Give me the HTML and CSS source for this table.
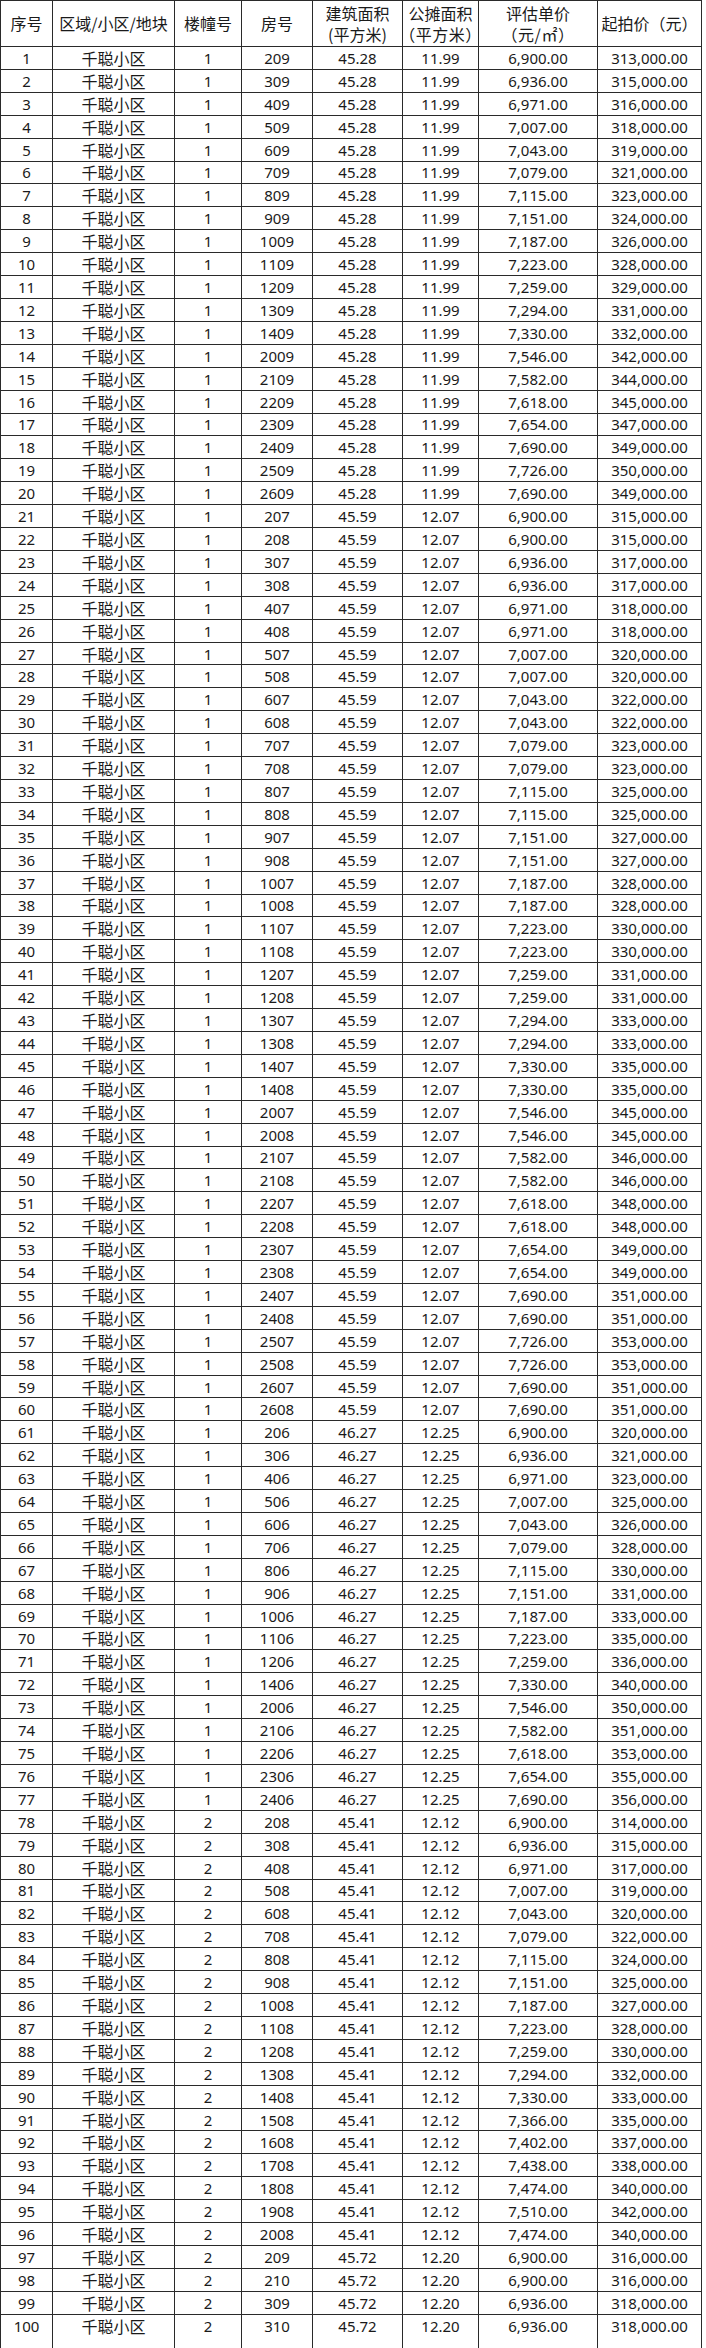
FILE: index.html
```html
<!DOCTYPE html>
<html lang="zh-CN">
<head>
<meta charset="utf-8">
<title>起拍价表</title>
<link rel="stylesheet" href="styles.css">
</head>
<body>
<table class="sheet">
<colgroup>
<col class="c1"><col class="c2"><col class="c3"><col class="c4"><col class="c5"><col class="c6"><col class="c7"><col class="c8">
</colgroup>
<thead>
<tr class="head"><th>序号</th><th>区域/小区/地块</th><th>楼幢号</th><th>房号</th><th>建筑面积<br>(平方米)</th><th>公摊面积<br><span class="unit">（平方米）</span></th><th>评估单价<br><span class="unit">（元/㎡）</span></th><th>起拍价（元）</th></tr>
</thead>
<tbody>
<tr><td>1</td><td>千聪小区</td><td>1</td><td>209</td><td>45.28</td><td>11.99</td><td>6,900.00</td><td>313,000.00</td></tr>
<tr><td>2</td><td>千聪小区</td><td>1</td><td>309</td><td>45.28</td><td>11.99</td><td>6,936.00</td><td>315,000.00</td></tr>
<tr><td>3</td><td>千聪小区</td><td>1</td><td>409</td><td>45.28</td><td>11.99</td><td>6,971.00</td><td>316,000.00</td></tr>
<tr><td>4</td><td>千聪小区</td><td>1</td><td>509</td><td>45.28</td><td>11.99</td><td>7,007.00</td><td>318,000.00</td></tr>
<tr><td>5</td><td>千聪小区</td><td>1</td><td>609</td><td>45.28</td><td>11.99</td><td>7,043.00</td><td>319,000.00</td></tr>
<tr><td>6</td><td>千聪小区</td><td>1</td><td>709</td><td>45.28</td><td>11.99</td><td>7,079.00</td><td>321,000.00</td></tr>
<tr><td>7</td><td>千聪小区</td><td>1</td><td>809</td><td>45.28</td><td>11.99</td><td>7,115.00</td><td>323,000.00</td></tr>
<tr><td>8</td><td>千聪小区</td><td>1</td><td>909</td><td>45.28</td><td>11.99</td><td>7,151.00</td><td>324,000.00</td></tr>
<tr><td>9</td><td>千聪小区</td><td>1</td><td>1009</td><td>45.28</td><td>11.99</td><td>7,187.00</td><td>326,000.00</td></tr>
<tr><td>10</td><td>千聪小区</td><td>1</td><td>1109</td><td>45.28</td><td>11.99</td><td>7,223.00</td><td>328,000.00</td></tr>
<tr><td>11</td><td>千聪小区</td><td>1</td><td>1209</td><td>45.28</td><td>11.99</td><td>7,259.00</td><td>329,000.00</td></tr>
<tr><td>12</td><td>千聪小区</td><td>1</td><td>1309</td><td>45.28</td><td>11.99</td><td>7,294.00</td><td>331,000.00</td></tr>
<tr><td>13</td><td>千聪小区</td><td>1</td><td>1409</td><td>45.28</td><td>11.99</td><td>7,330.00</td><td>332,000.00</td></tr>
<tr><td>14</td><td>千聪小区</td><td>1</td><td>2009</td><td>45.28</td><td>11.99</td><td>7,546.00</td><td>342,000.00</td></tr>
<tr><td>15</td><td>千聪小区</td><td>1</td><td>2109</td><td>45.28</td><td>11.99</td><td>7,582.00</td><td>344,000.00</td></tr>
<tr><td>16</td><td>千聪小区</td><td>1</td><td>2209</td><td>45.28</td><td>11.99</td><td>7,618.00</td><td>345,000.00</td></tr>
<tr><td>17</td><td>千聪小区</td><td>1</td><td>2309</td><td>45.28</td><td>11.99</td><td>7,654.00</td><td>347,000.00</td></tr>
<tr><td>18</td><td>千聪小区</td><td>1</td><td>2409</td><td>45.28</td><td>11.99</td><td>7,690.00</td><td>349,000.00</td></tr>
<tr><td>19</td><td>千聪小区</td><td>1</td><td>2509</td><td>45.28</td><td>11.99</td><td>7,726.00</td><td>350,000.00</td></tr>
<tr><td>20</td><td>千聪小区</td><td>1</td><td>2609</td><td>45.28</td><td>11.99</td><td>7,690.00</td><td>349,000.00</td></tr>
<tr><td>21</td><td>千聪小区</td><td>1</td><td>207</td><td>45.59</td><td>12.07</td><td>6,900.00</td><td>315,000.00</td></tr>
<tr><td>22</td><td>千聪小区</td><td>1</td><td>208</td><td>45.59</td><td>12.07</td><td>6,900.00</td><td>315,000.00</td></tr>
<tr><td>23</td><td>千聪小区</td><td>1</td><td>307</td><td>45.59</td><td>12.07</td><td>6,936.00</td><td>317,000.00</td></tr>
<tr><td>24</td><td>千聪小区</td><td>1</td><td>308</td><td>45.59</td><td>12.07</td><td>6,936.00</td><td>317,000.00</td></tr>
<tr><td>25</td><td>千聪小区</td><td>1</td><td>407</td><td>45.59</td><td>12.07</td><td>6,971.00</td><td>318,000.00</td></tr>
<tr><td>26</td><td>千聪小区</td><td>1</td><td>408</td><td>45.59</td><td>12.07</td><td>6,971.00</td><td>318,000.00</td></tr>
<tr><td>27</td><td>千聪小区</td><td>1</td><td>507</td><td>45.59</td><td>12.07</td><td>7,007.00</td><td>320,000.00</td></tr>
<tr><td>28</td><td>千聪小区</td><td>1</td><td>508</td><td>45.59</td><td>12.07</td><td>7,007.00</td><td>320,000.00</td></tr>
<tr><td>29</td><td>千聪小区</td><td>1</td><td>607</td><td>45.59</td><td>12.07</td><td>7,043.00</td><td>322,000.00</td></tr>
<tr><td>30</td><td>千聪小区</td><td>1</td><td>608</td><td>45.59</td><td>12.07</td><td>7,043.00</td><td>322,000.00</td></tr>
<tr><td>31</td><td>千聪小区</td><td>1</td><td>707</td><td>45.59</td><td>12.07</td><td>7,079.00</td><td>323,000.00</td></tr>
<tr><td>32</td><td>千聪小区</td><td>1</td><td>708</td><td>45.59</td><td>12.07</td><td>7,079.00</td><td>323,000.00</td></tr>
<tr><td>33</td><td>千聪小区</td><td>1</td><td>807</td><td>45.59</td><td>12.07</td><td>7,115.00</td><td>325,000.00</td></tr>
<tr><td>34</td><td>千聪小区</td><td>1</td><td>808</td><td>45.59</td><td>12.07</td><td>7,115.00</td><td>325,000.00</td></tr>
<tr><td>35</td><td>千聪小区</td><td>1</td><td>907</td><td>45.59</td><td>12.07</td><td>7,151.00</td><td>327,000.00</td></tr>
<tr><td>36</td><td>千聪小区</td><td>1</td><td>908</td><td>45.59</td><td>12.07</td><td>7,151.00</td><td>327,000.00</td></tr>
<tr><td>37</td><td>千聪小区</td><td>1</td><td>1007</td><td>45.59</td><td>12.07</td><td>7,187.00</td><td>328,000.00</td></tr>
<tr><td>38</td><td>千聪小区</td><td>1</td><td>1008</td><td>45.59</td><td>12.07</td><td>7,187.00</td><td>328,000.00</td></tr>
<tr><td>39</td><td>千聪小区</td><td>1</td><td>1107</td><td>45.59</td><td>12.07</td><td>7,223.00</td><td>330,000.00</td></tr>
<tr><td>40</td><td>千聪小区</td><td>1</td><td>1108</td><td>45.59</td><td>12.07</td><td>7,223.00</td><td>330,000.00</td></tr>
<tr><td>41</td><td>千聪小区</td><td>1</td><td>1207</td><td>45.59</td><td>12.07</td><td>7,259.00</td><td>331,000.00</td></tr>
<tr><td>42</td><td>千聪小区</td><td>1</td><td>1208</td><td>45.59</td><td>12.07</td><td>7,259.00</td><td>331,000.00</td></tr>
<tr><td>43</td><td>千聪小区</td><td>1</td><td>1307</td><td>45.59</td><td>12.07</td><td>7,294.00</td><td>333,000.00</td></tr>
<tr><td>44</td><td>千聪小区</td><td>1</td><td>1308</td><td>45.59</td><td>12.07</td><td>7,294.00</td><td>333,000.00</td></tr>
<tr><td>45</td><td>千聪小区</td><td>1</td><td>1407</td><td>45.59</td><td>12.07</td><td>7,330.00</td><td>335,000.00</td></tr>
<tr><td>46</td><td>千聪小区</td><td>1</td><td>1408</td><td>45.59</td><td>12.07</td><td>7,330.00</td><td>335,000.00</td></tr>
<tr><td>47</td><td>千聪小区</td><td>1</td><td>2007</td><td>45.59</td><td>12.07</td><td>7,546.00</td><td>345,000.00</td></tr>
<tr><td>48</td><td>千聪小区</td><td>1</td><td>2008</td><td>45.59</td><td>12.07</td><td>7,546.00</td><td>345,000.00</td></tr>
<tr><td>49</td><td>千聪小区</td><td>1</td><td>2107</td><td>45.59</td><td>12.07</td><td>7,582.00</td><td>346,000.00</td></tr>
<tr><td>50</td><td>千聪小区</td><td>1</td><td>2108</td><td>45.59</td><td>12.07</td><td>7,582.00</td><td>346,000.00</td></tr>
<tr><td>51</td><td>千聪小区</td><td>1</td><td>2207</td><td>45.59</td><td>12.07</td><td>7,618.00</td><td>348,000.00</td></tr>
<tr><td>52</td><td>千聪小区</td><td>1</td><td>2208</td><td>45.59</td><td>12.07</td><td>7,618.00</td><td>348,000.00</td></tr>
<tr><td>53</td><td>千聪小区</td><td>1</td><td>2307</td><td>45.59</td><td>12.07</td><td>7,654.00</td><td>349,000.00</td></tr>
<tr><td>54</td><td>千聪小区</td><td>1</td><td>2308</td><td>45.59</td><td>12.07</td><td>7,654.00</td><td>349,000.00</td></tr>
<tr><td>55</td><td>千聪小区</td><td>1</td><td>2407</td><td>45.59</td><td>12.07</td><td>7,690.00</td><td>351,000.00</td></tr>
<tr><td>56</td><td>千聪小区</td><td>1</td><td>2408</td><td>45.59</td><td>12.07</td><td>7,690.00</td><td>351,000.00</td></tr>
<tr><td>57</td><td>千聪小区</td><td>1</td><td>2507</td><td>45.59</td><td>12.07</td><td>7,726.00</td><td>353,000.00</td></tr>
<tr><td>58</td><td>千聪小区</td><td>1</td><td>2508</td><td>45.59</td><td>12.07</td><td>7,726.00</td><td>353,000.00</td></tr>
<tr><td>59</td><td>千聪小区</td><td>1</td><td>2607</td><td>45.59</td><td>12.07</td><td>7,690.00</td><td>351,000.00</td></tr>
<tr><td>60</td><td>千聪小区</td><td>1</td><td>2608</td><td>45.59</td><td>12.07</td><td>7,690.00</td><td>351,000.00</td></tr>
<tr><td>61</td><td>千聪小区</td><td>1</td><td>206</td><td>46.27</td><td>12.25</td><td>6,900.00</td><td>320,000.00</td></tr>
<tr><td>62</td><td>千聪小区</td><td>1</td><td>306</td><td>46.27</td><td>12.25</td><td>6,936.00</td><td>321,000.00</td></tr>
<tr><td>63</td><td>千聪小区</td><td>1</td><td>406</td><td>46.27</td><td>12.25</td><td>6,971.00</td><td>323,000.00</td></tr>
<tr><td>64</td><td>千聪小区</td><td>1</td><td>506</td><td>46.27</td><td>12.25</td><td>7,007.00</td><td>325,000.00</td></tr>
<tr><td>65</td><td>千聪小区</td><td>1</td><td>606</td><td>46.27</td><td>12.25</td><td>7,043.00</td><td>326,000.00</td></tr>
<tr><td>66</td><td>千聪小区</td><td>1</td><td>706</td><td>46.27</td><td>12.25</td><td>7,079.00</td><td>328,000.00</td></tr>
<tr><td>67</td><td>千聪小区</td><td>1</td><td>806</td><td>46.27</td><td>12.25</td><td>7,115.00</td><td>330,000.00</td></tr>
<tr><td>68</td><td>千聪小区</td><td>1</td><td>906</td><td>46.27</td><td>12.25</td><td>7,151.00</td><td>331,000.00</td></tr>
<tr><td>69</td><td>千聪小区</td><td>1</td><td>1006</td><td>46.27</td><td>12.25</td><td>7,187.00</td><td>333,000.00</td></tr>
<tr><td>70</td><td>千聪小区</td><td>1</td><td>1106</td><td>46.27</td><td>12.25</td><td>7,223.00</td><td>335,000.00</td></tr>
<tr><td>71</td><td>千聪小区</td><td>1</td><td>1206</td><td>46.27</td><td>12.25</td><td>7,259.00</td><td>336,000.00</td></tr>
<tr><td>72</td><td>千聪小区</td><td>1</td><td>1406</td><td>46.27</td><td>12.25</td><td>7,330.00</td><td>340,000.00</td></tr>
<tr><td>73</td><td>千聪小区</td><td>1</td><td>2006</td><td>46.27</td><td>12.25</td><td>7,546.00</td><td>350,000.00</td></tr>
<tr><td>74</td><td>千聪小区</td><td>1</td><td>2106</td><td>46.27</td><td>12.25</td><td>7,582.00</td><td>351,000.00</td></tr>
<tr><td>75</td><td>千聪小区</td><td>1</td><td>2206</td><td>46.27</td><td>12.25</td><td>7,618.00</td><td>353,000.00</td></tr>
<tr><td>76</td><td>千聪小区</td><td>1</td><td>2306</td><td>46.27</td><td>12.25</td><td>7,654.00</td><td>355,000.00</td></tr>
<tr><td>77</td><td>千聪小区</td><td>1</td><td>2406</td><td>46.27</td><td>12.25</td><td>7,690.00</td><td>356,000.00</td></tr>
<tr><td>78</td><td>千聪小区</td><td>2</td><td>208</td><td>45.41</td><td>12.12</td><td>6,900.00</td><td>314,000.00</td></tr>
<tr><td>79</td><td>千聪小区</td><td>2</td><td>308</td><td>45.41</td><td>12.12</td><td>6,936.00</td><td>315,000.00</td></tr>
<tr><td>80</td><td>千聪小区</td><td>2</td><td>408</td><td>45.41</td><td>12.12</td><td>6,971.00</td><td>317,000.00</td></tr>
<tr><td>81</td><td>千聪小区</td><td>2</td><td>508</td><td>45.41</td><td>12.12</td><td>7,007.00</td><td>319,000.00</td></tr>
<tr><td>82</td><td>千聪小区</td><td>2</td><td>608</td><td>45.41</td><td>12.12</td><td>7,043.00</td><td>320,000.00</td></tr>
<tr><td>83</td><td>千聪小区</td><td>2</td><td>708</td><td>45.41</td><td>12.12</td><td>7,079.00</td><td>322,000.00</td></tr>
<tr><td>84</td><td>千聪小区</td><td>2</td><td>808</td><td>45.41</td><td>12.12</td><td>7,115.00</td><td>324,000.00</td></tr>
<tr><td>85</td><td>千聪小区</td><td>2</td><td>908</td><td>45.41</td><td>12.12</td><td>7,151.00</td><td>325,000.00</td></tr>
<tr><td>86</td><td>千聪小区</td><td>2</td><td>1008</td><td>45.41</td><td>12.12</td><td>7,187.00</td><td>327,000.00</td></tr>
<tr><td>87</td><td>千聪小区</td><td>2</td><td>1108</td><td>45.41</td><td>12.12</td><td>7,223.00</td><td>328,000.00</td></tr>
<tr><td>88</td><td>千聪小区</td><td>2</td><td>1208</td><td>45.41</td><td>12.12</td><td>7,259.00</td><td>330,000.00</td></tr>
<tr><td>89</td><td>千聪小区</td><td>2</td><td>1308</td><td>45.41</td><td>12.12</td><td>7,294.00</td><td>332,000.00</td></tr>
<tr><td>90</td><td>千聪小区</td><td>2</td><td>1408</td><td>45.41</td><td>12.12</td><td>7,330.00</td><td>333,000.00</td></tr>
<tr><td>91</td><td>千聪小区</td><td>2</td><td>1508</td><td>45.41</td><td>12.12</td><td>7,366.00</td><td>335,000.00</td></tr>
<tr><td>92</td><td>千聪小区</td><td>2</td><td>1608</td><td>45.41</td><td>12.12</td><td>7,402.00</td><td>337,000.00</td></tr>
<tr><td>93</td><td>千聪小区</td><td>2</td><td>1708</td><td>45.41</td><td>12.12</td><td>7,438.00</td><td>338,000.00</td></tr>
<tr><td>94</td><td>千聪小区</td><td>2</td><td>1808</td><td>45.41</td><td>12.12</td><td>7,474.00</td><td>340,000.00</td></tr>
<tr><td>95</td><td>千聪小区</td><td>2</td><td>1908</td><td>45.41</td><td>12.12</td><td>7,510.00</td><td>342,000.00</td></tr>
<tr><td>96</td><td>千聪小区</td><td>2</td><td>2008</td><td>45.41</td><td>12.12</td><td>7,474.00</td><td>340,000.00</td></tr>
<tr><td>97</td><td>千聪小区</td><td>2</td><td>209</td><td>45.72</td><td>12.20</td><td>6,900.00</td><td>316,000.00</td></tr>
<tr><td>98</td><td>千聪小区</td><td>2</td><td>210</td><td>45.72</td><td>12.20</td><td>6,900.00</td><td>316,000.00</td></tr>
<tr><td>99</td><td>千聪小区</td><td>2</td><td>309</td><td>45.72</td><td>12.20</td><td>6,936.00</td><td>318,000.00</td></tr>
<tr class="last"><td>100</td><td>千聪小区</td><td>2</td><td>310</td><td>45.72</td><td>12.20</td><td>6,936.00</td><td>318,000.00</td></tr>
</tbody>
</table>
</body>
</html>
```

FILE: styles.css
```css
html, body {
  margin: 0;
  padding: 0;
  background: #ffffff;
}

body {
  font-family: "Noto Sans", "Noto Sans CJK SC", sans-serif;
  color: #1a1a1a;
  font-size: 15px;
}

.sheet {
  border-collapse: collapse;
  table-layout: fixed;
  width: 701px;
  margin: 0;
}

.c1 { width: 52px; }
.c2 { width: 122px; }
.c3 { width: 67px; }
.c4 { width: 71px; }
.c5 { width: 90px; }
.c6 { width: 76px; }
.c7 { width: 119px; }
.c8 { width: 104px; }

.sheet th,
.sheet td {
  border: 1px solid #2a2a2a;
  padding: 0;
  text-align: center;
  vertical-align: middle;
  font-weight: normal;
  white-space: nowrap;
  overflow: hidden;
}

.sheet th {
  height: 45px;
  line-height: 21px;
  font-size: 16px;
  font-family: "Noto Sans CJK SC", sans-serif;
}

.unit {
  font-feature-settings: "halt" 1;
  letter-spacing: 0.5px;
}

.sheet td {
  height: 21.92px;
  line-height: 20px;
}

.sheet td:nth-child(2) {
  font-size: 16px;
  font-family: "Noto Sans CJK SC", sans-serif;
}

.sheet tr.last td {
  height: 32px;
  vertical-align: top;
  padding-top: 1px;
}
```
